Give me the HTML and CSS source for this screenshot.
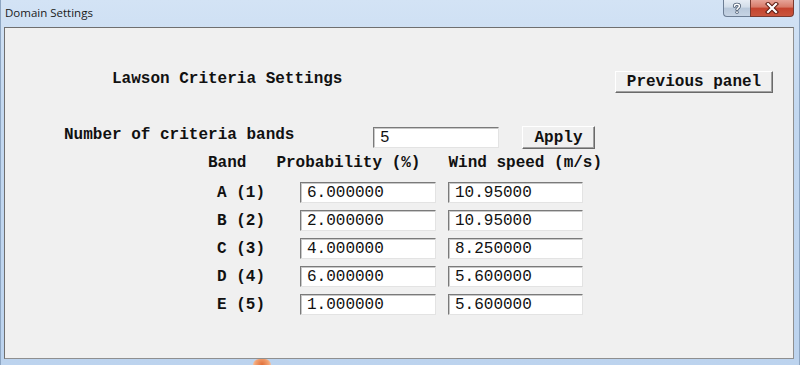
FILE: index.html
```html
<!DOCTYPE html>
<html>
<head>
<meta charset="utf-8">
<title>Domain Settings</title>
<link rel="stylesheet" href="styles.css">
</head>
<body>
<div class="window">
  <div class="titlebar">
    <div class="title">Domain Settings</div>
    <div class="caption-buttons">
      <div class="cap-btn help">
        <svg width="12" height="12" viewBox="0 0 12 12"><path d="M3.5 4.2 C3.5 1.8 8.5 1.6 8.5 4.1 C8.5 5.8 6 5.9 6 7.6" fill="none" stroke="#4a5a70" stroke-width="3.2" stroke-linecap="round"/><path d="M3.5 4.2 C3.5 1.8 8.5 1.6 8.5 4.1 C8.5 5.8 6 5.9 6 7.6" fill="none" stroke="#fff" stroke-width="1.6" stroke-linecap="round"/><circle cx="6" cy="10.2" r="1.6" fill="#4a5a70"/><circle cx="6" cy="10.2" r="0.9" fill="#fff"/></svg>
      </div>
      <div class="cap-btn close">
        <svg width="14" height="12" viewBox="0 0 14 12"><path d="M3 2 L11 10 M11 2 L3 10" stroke="#5a1a10" stroke-width="4.2" stroke-linecap="square"/><path d="M3 2 L11 10 M11 2 L3 10" stroke="#fff" stroke-width="2.2" stroke-linecap="square"/></svg>
      </div>
    </div>
  </div>
  <div class="client">
    <div class="header">
      <div class="heading">Lawson Criteria Settings</div>
      <div class="btn prev-btn">Previous panel</div>
    </div>
    <div class="count-row">
      <div class="count-label">Number of criteria bands</div>
      <div class="field count-field">5</div>
      <div class="btn apply-btn">Apply</div>
    </div>
    <div class="col-heads">
      <div class="head-band">Band</div>
      <div class="head-prob">Probability (%)</div>
      <div class="head-wind">Wind speed (m/s)</div>
    </div>
    <div class="bands">
      <div class="band-row"><div class="band-label">A (1)</div><div class="field prob">6.000000</div><div class="field wind">10.95000</div></div>
      <div class="band-row"><div class="band-label">B (2)</div><div class="field prob">2.000000</div><div class="field wind">10.95000</div></div>
      <div class="band-row"><div class="band-label">C (3)</div><div class="field prob">4.000000</div><div class="field wind">8.250000</div></div>
      <div class="band-row"><div class="band-label">D (4)</div><div class="field prob">6.000000</div><div class="field wind">5.600000</div></div>
      <div class="band-row"><div class="band-label">E (5)</div><div class="field prob">1.000000</div><div class="field wind">5.600000</div></div>
    </div>
  </div>
  <div class="taskbar-peek"></div>
</div>
</body>
</html>
```
FILE: styles.css
```css
html, body {
  margin: 0;
  padding: 0;
}
body {
  width: 800px;
  height: 365px;
  overflow: hidden;
  background: #c2d8f0;
}
.window {
  position: relative;
  width: 800px;
  height: 365px;
  box-sizing: border-box;
  display: flex;
  flex-direction: column;
  background: linear-gradient(180deg, #d3e3f5 0%, #c3d8f0 30%, #bcd3ee 100%);
  border-left: 1px solid #8ea6c2;
  border-right: 1px solid #8ea6c2;
}
.titlebar {
  height: 27px;
  flex: none;
  display: flex;
  justify-content: space-between;
  align-items: flex-start;
}
.title {
  font-family: "Open Sans", "Noto Sans", sans-serif;
  font-size: 11.5px;
  line-height: 16px;
  color: #1a1a1a;
  margin: 5px 0 0 4px;
}
.caption-buttons {
  display: flex;
  margin-right: 5px;
}
.cap-btn {
  height: 17px;
  box-sizing: border-box;
  display: flex;
  align-items: center;
  justify-content: center;
  border: 1px solid #6d7e94;
  border-top: none;
}
.help {
  width: 27px;
  border-right: none;
  border-bottom-left-radius: 4px;
  background: linear-gradient(180deg, #e6edf5 0%, #d2dde9 45%, #b8c8da 50%, #c6d4e4 100%);
}
.close {
  width: 44px;
  border-color: #7a3a30;
  border-bottom-right-radius: 4px;
  background: linear-gradient(180deg, #e6a498 0%, #d77a68 45%, #c4432e 50%, #c9553d 100%);
}
.client {
  flex: 1;
  margin: 0 5px 6px 3px;
  background: #f0f0f0;
  border-top: 1px solid #6f6f6f;
  border-left: 1px solid #6f6f6f;
  border-right: 1px solid #8f8f8f;
  border-bottom: 1px solid #8f8f8f;
  font-family: "Liberation Mono", "Courier New", monospace;
  font-size: 16px;
  line-height: 18px;
  color: #111;
}
.header {
  display: flex;
  justify-content: space-between;
  align-items: flex-start;
  margin-top: 42px;
  padding-left: 107px;
  padding-right: 20px;
}
.heading {
  font-weight: bold;
}
.btn {
  box-sizing: border-box;
  background: #f0f0f0;
  border-top: 1px solid #ffffff;
  border-left: 1px solid #ffffff;
  border-right: 1px solid #6a6a6a;
  border-bottom: 1px solid #6a6a6a;
  box-shadow: inset -1px -1px 0 #a0a0a0;
  font-weight: bold;
  text-align: center;
}
.prev-btn {
  width: 158px;
  height: 22px;
  margin-top: 1px;
  padding-top: 1px;
}
.count-row {
  display: flex;
  align-items: flex-start;
  margin-top: 32px;
  padding-left: 59px;
}
.count-label {
  width: 309px;
  margin-top: 1px;
  font-weight: bold;
}
.field {
  box-sizing: border-box;
  background: #ffffff;
  border-top: 1px solid #7a7a7a;
  border-left: 1px solid #7a7a7a;
  border-right: 1px solid #e3e3e3;
  border-bottom: 1px solid #e3e3e3;
  box-shadow: inset 1px 1px 0 #c8c8c8;
  padding: 1px 5px 0 6px;
  height: 21px;
  white-space: nowrap;
}
.count-field {
  width: 126px;
  margin-top: 2px;
}
.apply-btn {
  width: 73px;
  height: 23px;
  margin-left: 23px;
  margin-top: 1px;
  padding-top: 2px;
}
.col-heads {
  display: flex;
  margin-top: 5px;
  padding-left: 203px;
  font-weight: bold;
}
.head-prob {
  margin-left: 30px;
}
.head-wind {
  margin-left: 28px;
}
.bands {
  display: flex;
  flex-direction: column;
  gap: 7px;
  margin-top: 10px;
  padding-left: 212px;
}
.band-row {
  display: flex;
  align-items: center;
}
.band-label {
  width: 83px;
  font-weight: bold;
}
.prob {
  width: 136px;
}
.wind {
  width: 135px;
  margin-left: 12px;
}
.taskbar-peek {
  position: absolute;
  left: 252px;
  top: 359px;
  width: 18px;
  height: 6px;
  border-radius: 6px 6px 0 0;
  background: radial-gradient(circle at 50% 90%, #e2703a 0%, #f1a070 60%, #f6d0b4 100%);
}
```
